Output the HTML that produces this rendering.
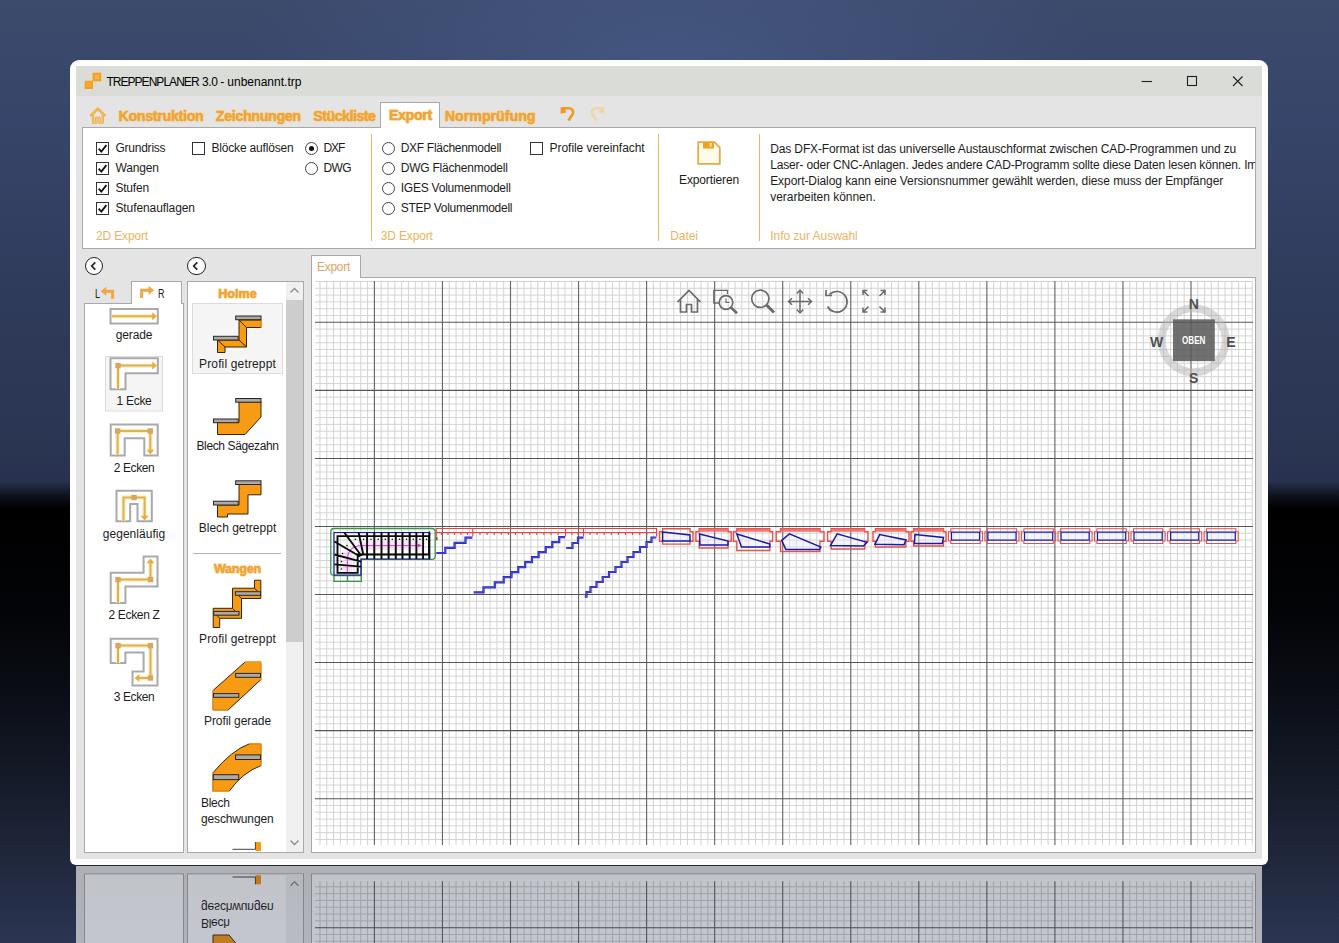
<!DOCTYPE html>
<html lang="de"><head><meta charset="utf-8"><title>TREPPENPLANER 3.0 - unbenannt.trp</title>
<style>
html,body{margin:0;padding:0}
body{width:1339px;height:943px;overflow:hidden;position:relative;font-family:"Liberation Sans",sans-serif;background:#000}
.abs,.t{position:absolute}
.t{white-space:nowrap;display:block}
#bg{left:0;top:0;width:1339px;height:943px;overflow:hidden}
#win{left:70px;top:60px;width:1198px;height:805px;background:#fdfdfd;border-radius:9px 9px 6px 6px}
.cb{position:absolute;width:11px;height:11px;border:1px solid #333;background:#fff;box-sizing:content-box}
.rb{position:absolute;width:11px;height:11px;border:1px solid #444;background:#fff;border-radius:50%;box-sizing:content-box}
.sep{position:absolute;width:1.4px;background:#e3bc5c;top:134px;height:107px}
.glow{text-shadow:0 0 2px #f9d27f,0 0 1px #f3b24e;-webkit-text-stroke:.35px #f0a336}
.circ{position:absolute;width:16.200px;height:16.200px;border:1.300px solid #222;border-radius:50%;background:#fff;box-sizing:content-box}
</style></head><body>
<div id="bg" class="abs">
<div class="abs" style="left:0;top:0;width:1339px;height:510px;background:linear-gradient(#3c4a6c 0px,#37456a 120px,#2f3b5a 300px,#2a3552 450px,#283250 481px,#0d1019 497px,#000 509px)"></div>
<div class="abs" style="left:0;top:0;width:1339px;height:300px;background:radial-gradient(ellipse 430px 260px at 670px 90px,rgba(80,102,152,.5),rgba(72,92,138,.3) 55%,rgba(60,74,108,0) 100%)"></div>
<div class="abs" style="left:0;top:509px;width:1339px;height:434px;background:linear-gradient(#000 0px,#030407 100px,#0a0d15 180px,#141926 260px,#1f2639 340px,#2b3552 434px)"></div>
</div>
<div id="refl" class="abs" style="left:76px;top:866px;width:1186px;height:77px;overflow:hidden;background:#e4e4e4;opacity:.72"><div class="abs" style="left:-76px;top:0;width:1339px;height:858.700px;transform-origin:0 0;transform:translateY(860.300px) scaleY(-1)"><div class="abs" style="left:84px;top:303px;width:100px;height:550px;background:#fff;border:1px solid #a9a9a9;box-sizing:border-box"></div><div class="abs" style="left:187px;top:281px;width:117px;height:572px;background:#fff;border:1px solid #a9a9a9;box-sizing:border-box"></div><div class="abs" style="left:286px;top:642px;width:17px;height:210px;background:#f0f0f0"></div><svg class="abs" style="left:286px;top:834px" width="17" height="17" viewBox="0 0 17 17"><path d="M4.500 6.500l4 4l4 -4" fill="none" stroke="#8a8a8a" stroke-width="1.300"/></svg><svg class="abs" style="left:205px;top:740px" width="70" height="112" viewBox="205 740 70 112"><path d="M213 791.300V772.700Q232 750 249 744H260.900V765.700Q243 772 229.100 791.300z" fill="#f79a14" stroke="#3a2408" stroke-width="1" stroke-linejoin="miter" /><rect x="235.5" y="754.9" width="25.0" height="4.6" fill="#adaaa6" stroke="#262626" stroke-width="1"/><rect x="213.3" y="774.7" width="25.4" height="4.9" fill="#adaaa6" stroke="#262626" stroke-width="1"/><rect x="255.400" y="842" width="5.600" height="9" fill="#f79a14"/><path d="M232.500 849.300H255.400V842" stroke="#444" stroke-width="1" fill="none"/></svg><span class="t " style="left:201.00px;top:794.80px;font-size:12px;line-height:17px;color:#1c1c1c;letter-spacing:-0.303px;">Blech</span><span class="t " style="left:201.00px;top:811.10px;font-size:12px;line-height:17px;color:#1c1c1c;letter-spacing:-0.141px;">geschwungen</span><div class="abs" style="left:311px;top:277px;width:945px;height:576px;background:#fff;border:1px solid #a9a9a9;box-sizing:border-box"></div><svg class="abs" style="left:312px;top:760px" width="943" height="92" viewBox="312 760 943 92"><path d="M319.96 281.0V845.0M326.76 281.0V845.0M333.57 281.0V845.0M340.38 281.0V845.0M347.18 281.0V845.0M353.98 281.0V845.0M360.79 281.0V845.0M367.59 281.0V845.0M381.20 281.0V845.0M388.01 281.0V845.0M394.81 281.0V845.0M401.62 281.0V845.0M408.42 281.0V845.0M415.23 281.0V845.0M422.03 281.0V845.0M428.84 281.0V845.0M435.64 281.0V845.0M449.25 281.0V845.0M456.06 281.0V845.0M462.87 281.0V845.0M469.67 281.0V845.0M476.47 281.0V845.0M483.28 281.0V845.0M490.08 281.0V845.0M496.89 281.0V845.0M503.69 281.0V845.0M517.30 281.0V845.0M524.11 281.0V845.0M530.91 281.0V845.0M537.72 281.0V845.0M544.52 281.0V845.0M551.33 281.0V845.0M558.13 281.0V845.0M564.94 281.0V845.0M571.75 281.0V845.0M585.36 281.0V845.0M592.16 281.0V845.0M598.96 281.0V845.0M605.77 281.0V845.0M612.57 281.0V845.0M619.38 281.0V845.0M626.18 281.0V845.0M632.99 281.0V845.0M639.79 281.0V845.0M653.40 281.0V845.0M660.21 281.0V845.0M667.01 281.0V845.0M673.82 281.0V845.0M680.62 281.0V845.0M687.43 281.0V845.0M694.23 281.0V845.0M701.04 281.0V845.0M707.85 281.0V845.0M721.45 281.0V845.0M728.26 281.0V845.0M735.06 281.0V845.0M741.87 281.0V845.0M748.67 281.0V845.0M755.48 281.0V845.0M762.28 281.0V845.0M769.09 281.0V845.0M775.89 281.0V845.0M789.50 281.0V845.0M796.31 281.0V845.0M803.12 281.0V845.0M809.92 281.0V845.0M816.72 281.0V845.0M823.53 281.0V845.0M830.34 281.0V845.0M837.14 281.0V845.0M843.94 281.0V845.0M857.55 281.0V845.0M864.36 281.0V845.0M871.16 281.0V845.0M877.97 281.0V845.0M884.77 281.0V845.0M891.58 281.0V845.0M898.38 281.0V845.0M905.19 281.0V845.0M912.00 281.0V845.0M925.60 281.0V845.0M932.41 281.0V845.0M939.21 281.0V845.0M946.02 281.0V845.0M952.82 281.0V845.0M959.63 281.0V845.0M966.43 281.0V845.0M973.24 281.0V845.0M980.04 281.0V845.0M993.65 281.0V845.0M1000.46 281.0V845.0M1007.26 281.0V845.0M1014.07 281.0V845.0M1020.88 281.0V845.0M1027.68 281.0V845.0M1034.48 281.0V845.0M1041.29 281.0V845.0M1048.09 281.0V845.0M1061.70 281.0V845.0M1068.51 281.0V845.0M1075.32 281.0V845.0M1082.12 281.0V845.0M1088.92 281.0V845.0M1095.73 281.0V845.0M1102.53 281.0V845.0M1109.34 281.0V845.0M1116.14 281.0V845.0M1129.76 281.0V845.0M1136.56 281.0V845.0M1143.36 281.0V845.0M1150.17 281.0V845.0M1156.97 281.0V845.0M1163.78 281.0V845.0M1170.59 281.0V845.0M1177.39 281.0V845.0M1184.19 281.0V845.0M1197.80 281.0V845.0M1204.61 281.0V845.0M1211.41 281.0V845.0M1218.22 281.0V845.0M1225.03 281.0V845.0M1231.83 281.0V845.0M1238.63 281.0V845.0M1245.44 281.0V845.0M1252.24 281.0V845.0M315.0 281.47H1253.0M315.0 288.28H1253.0M315.0 295.08H1253.0M315.0 301.88H1253.0M315.0 308.69H1253.0M315.0 315.50H1253.0M315.0 329.11H1253.0M315.0 335.91H1253.0M315.0 342.72H1253.0M315.0 349.52H1253.0M315.0 356.32H1253.0M315.0 363.13H1253.0M315.0 369.94H1253.0M315.0 376.74H1253.0M315.0 383.55H1253.0M315.0 397.15H1253.0M315.0 403.96H1253.0M315.0 410.76H1253.0M315.0 417.57H1253.0M315.0 424.38H1253.0M315.0 431.18H1253.0M315.0 437.99H1253.0M315.0 444.79H1253.0M315.0 451.60H1253.0M315.0 465.21H1253.0M315.0 472.01H1253.0M315.0 478.81H1253.0M315.0 485.62H1253.0M315.0 492.43H1253.0M315.0 499.23H1253.0M315.0 506.03H1253.0M315.0 512.84H1253.0M315.0 519.64H1253.0M315.0 533.25H1253.0M315.0 540.06H1253.0M315.0 546.87H1253.0M315.0 553.67H1253.0M315.0 560.48H1253.0M315.0 567.28H1253.0M315.0 574.09H1253.0M315.0 580.89H1253.0M315.0 587.69H1253.0M315.0 601.31H1253.0M315.0 608.11H1253.0M315.0 614.91H1253.0M315.0 621.72H1253.0M315.0 628.52H1253.0M315.0 635.33H1253.0M315.0 642.13H1253.0M315.0 648.94H1253.0M315.0 655.75H1253.0M315.0 669.36H1253.0M315.0 676.16H1253.0M315.0 682.96H1253.0M315.0 689.77H1253.0M315.0 696.58H1253.0M315.0 703.38H1253.0M315.0 710.18H1253.0M315.0 716.99H1253.0M315.0 723.80H1253.0M315.0 737.40H1253.0M315.0 744.21H1253.0M315.0 751.01H1253.0M315.0 757.82H1253.0M315.0 764.62H1253.0M315.0 771.43H1253.0M315.0 778.24H1253.0M315.0 785.04H1253.0M315.0 791.85H1253.0M315.0 805.45H1253.0M315.0 812.26H1253.0M315.0 819.07H1253.0M315.0 825.87H1253.0M315.0 832.67H1253.0M315.0 839.48H1253.0" stroke="#cfcfcf" stroke-width="1" fill="none"/><path d="M374.40 281.0V845.0M442.45 281.0V845.0M510.50 281.0V845.0M578.55 281.0V845.0M646.60 281.0V845.0M714.65 281.0V845.0M782.70 281.0V845.0M850.75 281.0V845.0M918.80 281.0V845.0M986.85 281.0V845.0M1054.90 281.0V845.0M1122.95 281.0V845.0M1191.00 281.0V845.0" stroke="#686868" stroke-width="1.150" fill="none"/><path d="M315.0 322.30H1253.0M315.0 390.35H1253.0M315.0 458.40H1253.0M315.0 526.45H1253.0M315.0 594.50H1253.0M315.0 662.55H1253.0M315.0 730.60H1253.0M315.0 798.65H1253.0" stroke="#555" stroke-width="1.050" fill="none"/></svg></div></div><div id="win" class="abs"></div><div id="page" class="abs" style="left:0;top:0;width:1339px;height:943px"><div class="abs" style="left:76px;top:66px;width:1186px;height:793px;background:#e4e4e4"></div><div class="abs" style="left:76px;top:66px;width:1186px;height:30px;background:#dadcd7"></div><svg class="abs" style="left:84px;top:72px" width="18" height="18" viewBox="0 0 18 18"><rect x="0.700" y="8.700" width="8.300" height="8.300" fill="#f5a11c"/><rect x="8.600" y="0.700" width="8.600" height="8.600" fill="#f5a11c"/><rect x="10.800" y="2.800" width="4.400" height="4.400" fill="#f9b646"/><rect x="2.600" y="10.700" width="4.400" height="4.400" fill="#f7ac30"/></svg><span class="t" style="left:106.400px;top:74.10px;font-size:12px;line-height:17px;color:#000"><span style="letter-spacing:-0.961px">TREPPENPLANER</span> <span style="letter-spacing:-0.402px">3.0 -</span> <span style="letter-spacing:0.003px">unbenannt.trp</span></span><svg class="abs" style="left:1130px;top:66px" width="130" height="30" viewBox="0 0 130 30"><g stroke="#222" stroke-width="1.1" fill="none"><path d="M11.5 15.5h10.5"/><rect x="57.5" y="10.5" width="9" height="9"/><path d="M103 10.5l9.5 9.5M112.5 10.5l-9.5 9.5"/></g></svg><svg class="abs" style="left:89px;top:105.500px" width="18" height="19" viewBox="0 0 18 19"><g fill="none" stroke-linejoin="round" stroke-linecap="round"><path d="M2 9.300L8.900 2.600L15.800 9.300M4 8.600V16.600H7.300V11.800H10.500V16.600H13.800V8.600" stroke="#f0a130" stroke-width="2.300"/><path d="M2 9.300L8.900 2.600L15.800 9.300M4 8.600V16.600H7.300V11.800H10.500V16.600H13.800V8.600" stroke="#fbdc86" stroke-width=".800"/></g></svg><span class="t glow" style="left:118.50px;top:106.00px;font-size:14.2px;line-height:20px;color:#f0a336;font-weight:bold;letter-spacing:-0.279px;">Konstruktion</span><span class="t glow" style="left:215.80px;top:106.00px;font-size:14.2px;line-height:20px;color:#f0a336;font-weight:bold;letter-spacing:-0.305px;">Zeichnungen</span><span class="t glow" style="left:313.30px;top:106.00px;font-size:14.2px;line-height:20px;color:#f0a336;font-weight:bold;letter-spacing:-0.488px;">Stückliste</span><div class="abs" style="left:82px;top:127px;width:1174px;height:122px;background:#fff;border:1px solid #a9a9a9;box-sizing:border-box"></div><div class="abs" style="left:380px;top:102px;width:60px;height:26px;background:#fff;border:1px solid #a9a9a9;border-bottom:none;box-sizing:border-box"></div><span class="t glow" style="left:388.90px;top:105.00px;font-size:14.2px;line-height:20px;color:#f0a336;font-weight:bold;letter-spacing:-0.328px;">Export</span><span class="t glow" style="left:444.80px;top:106.00px;font-size:14.2px;line-height:20px;color:#f0a336;font-weight:bold;letter-spacing:0.009px;">Normprüfung</span><svg class="abs" style="left:559px;top:105px" width="18" height="18" viewBox="0 0 18 18"><path d="M3 3.2h7.2a4 4 0 0 1 3.6 5.6L9.5 15.5" fill="none" stroke="#ee9a28" stroke-width="2.6" stroke-linejoin="miter"/><path d="M1.600 1.800V8.800L7.400 7.600L6 4.400z" fill="#ee9a28"/></svg><svg class="abs" style="left:588px;top:105px" width="18" height="18" viewBox="0 0 18 18"><g transform="translate(18,0) scale(-1,1)"><path d="M3 3.2h7.2a4 4 0 0 1 3.6 5.6L9.5 15.5" fill="none" stroke="#efd6a4" stroke-width="2.600"/><path d="M1.600 1.800V8.800L7.400 7.600L6 4.400z" fill="#efd6a4"/></g></svg><div class="cb" style="left:96.0px;top:142.1px"><svg width="11" height="11" viewBox="0.500 0.500 11 11" style="position:absolute;left:0;top:0"><path d="M2.2 6.2l2.6 2.9L9.9 2.6" fill="none" stroke="#111" stroke-width="1.8"/></svg></div><span class="t " style="left:115.40px;top:140.20px;font-size:12px;line-height:17px;color:#1c1c1c;letter-spacing:-0.224px;">Grundriss</span><div class="cb" style="left:96.0px;top:162.1px"><svg width="11" height="11" viewBox="0.500 0.500 11 11" style="position:absolute;left:0;top:0"><path d="M2.2 6.2l2.6 2.9L9.9 2.6" fill="none" stroke="#111" stroke-width="1.8"/></svg></div><span class="t " style="left:115.40px;top:160.20px;font-size:12px;line-height:17px;color:#1c1c1c;letter-spacing:-0.125px;">Wangen</span><div class="cb" style="left:96.0px;top:182.2px"><svg width="11" height="11" viewBox="0.500 0.500 11 11" style="position:absolute;left:0;top:0"><path d="M2.2 6.2l2.6 2.9L9.9 2.6" fill="none" stroke="#111" stroke-width="1.8"/></svg></div><span class="t " style="left:115.40px;top:180.30px;font-size:12px;line-height:17px;color:#1c1c1c;letter-spacing:-0.199px;">Stufen</span><div class="cb" style="left:96.0px;top:202.3px"><svg width="11" height="11" viewBox="0.500 0.500 11 11" style="position:absolute;left:0;top:0"><path d="M2.2 6.2l2.6 2.9L9.9 2.6" fill="none" stroke="#111" stroke-width="1.8"/></svg></div><span class="t " style="left:115.40px;top:200.40px;font-size:12px;line-height:17px;color:#1c1c1c;letter-spacing:-0.088px;">Stufenauflagen</span><div class="cb" style="left:192.2px;top:142.1px"></div><span class="t " style="left:211.50px;top:140.20px;font-size:12px;line-height:17px;color:#1c1c1c;letter-spacing:-0.181px;">Blöcke auflösen</span><div class="rb" style="left:304.5px;top:141.9px"><div style="position:absolute;left:3px;top:3px;width:5px;height:5px;border-radius:50%;background:#111"></div></div><span class="t " style="left:323.40px;top:140.20px;font-size:12px;line-height:17px;color:#1c1c1c;letter-spacing:-1.000px;">DXF</span><div class="rb" style="left:304.5px;top:161.9px"></div><span class="t " style="left:323.40px;top:160.20px;font-size:12px;line-height:17px;color:#1c1c1c;letter-spacing:-0.609px;">DWG</span><span class="t " style="left:96.00px;top:227.90px;font-size:12px;line-height:17px;color:#e9b45e;letter-spacing:-0.151px;">2D Export</span><div class="sep" style="left:371px"></div><div class="rb" style="left:381.5px;top:141.9px"></div><span class="t " style="left:400.70px;top:140.20px;font-size:12px;line-height:17px;color:#1c1c1c;letter-spacing:-0.287px;">DXF Flächenmodell</span><div class="rb" style="left:381.5px;top:161.9px"></div><span class="t " style="left:400.70px;top:160.20px;font-size:12px;line-height:17px;color:#1c1c1c;letter-spacing:-0.218px;">DWG Flächenmodell</span><div class="rb" style="left:381.5px;top:182.0px"></div><span class="t " style="left:400.70px;top:180.30px;font-size:12px;line-height:17px;color:#1c1c1c;letter-spacing:-0.226px;">IGES Volumenmodell</span><div class="rb" style="left:381.5px;top:202.1px"></div><span class="t " style="left:400.70px;top:200.40px;font-size:12px;line-height:17px;color:#1c1c1c;letter-spacing:-0.278px;">STEP Volumenmodell</span><div class="cb" style="left:530.3px;top:142.1px"></div><span class="t " style="left:549.60px;top:140.20px;font-size:12px;line-height:17px;color:#1c1c1c;letter-spacing:-0.055px;">Profile vereinfacht</span><span class="t " style="left:380.80px;top:227.90px;font-size:12px;line-height:17px;color:#e9b45e;letter-spacing:-0.151px;">3D Export</span><div class="sep" style="left:657.7px"></div><svg class="abs" style="left:696px;top:140px" width="26" height="26" viewBox="0 0 26 26"><path d="M2.2 2.2h16.3l5.3 5.3v16.3H2.200z" fill="#fffbe9" stroke="#e3ab45" stroke-width="1.800" stroke-linejoin="miter"/><rect x="7" y="2.200" width="11" height="6.300" fill="#efa21e"/><rect x="13.600" y="3" width="2.200" height="3.600" fill="#fbe6a8"/></svg><span class="t " style="left:679.00px;top:171.90px;font-size:12px;line-height:17px;color:#1c1c1c;letter-spacing:-0.124px;">Exportieren</span><span class="t " style="left:670.30px;top:227.90px;font-size:12px;line-height:17px;color:#e9b45e;letter-spacing:-0.102px;">Datei</span><div class="sep" style="left:758.8px"></div><div class="abs" style="left:765px;top:134px;width:489.5px;height:80px;overflow:hidden"><span class="t " style="left:5.20px;top:7.30px;font-size:12px;line-height:17px;color:#1c1c1c;letter-spacing:-0.126px;">Das DFX-Format ist das universelle Austauschformat zwischen CAD-Programmen und zu</span><span class="t " style="left:5.20px;top:23.10px;font-size:12px;line-height:17px;color:#1c1c1c;letter-spacing:-0.154px;">Laser- oder CNC-Anlagen. Jedes andere CAD-Programm sollte diese Daten lesen können. Im</span><span class="t " style="left:5.20px;top:38.90px;font-size:12px;line-height:17px;color:#1c1c1c;letter-spacing:-0.075px;">Export-Dialog kann eine Versionsnummer gewählt werden, diese muss der Empfänger</span><span class="t " style="left:5.20px;top:54.70px;font-size:12px;line-height:17px;color:#1c1c1c;letter-spacing:-0.030px;">verarbeiten können.</span></div><span class="t " style="left:770.20px;top:227.90px;font-size:12px;line-height:17px;color:#e9b45e;letter-spacing:-0.034px;">Info zur Auswahl</span><div class="circ" style="left:84.6px;top:257.3px"><svg width="16" height="16" viewBox="0.500 0.500 16 16" style="position:absolute;left:0;top:0"><path d="M9.800 4.800L6.200 8.500l3.600 3.700" fill="none" stroke="#222" stroke-width="1.7"/></svg></div><div class="circ" style="left:187.4px;top:257.3px"><svg width="16" height="16" viewBox="0.500 0.500 16 16" style="position:absolute;left:0;top:0"><path d="M9.800 4.800L6.200 8.500l3.600 3.700" fill="none" stroke="#222" stroke-width="1.7"/></svg></div><div class="abs" style="left:84px;top:303px;width:100px;height:550px;background:#fff;border:1px solid #a9a9a9;box-sizing:border-box"></div><div class="abs" style="left:131px;top:281px;width:51px;height:23px;background:#fff;border:1px solid #a9a9a9;border-bottom:none;box-sizing:border-box"></div><span class="t " style="left:94.80px;top:285.70px;font-size:12px;line-height:17px;color:#222;transform-origin:0 50%;transform:scaleX(0.7492);">L</span><span class="t " style="left:158.00px;top:285.50px;font-size:12px;line-height:17px;color:#222;transform-origin:0 50%;transform:scaleX(0.7501);">R</span><svg class="abs" style="left:100.300px;top:285.800px" width="16" height="15" viewBox="0 0 16 15"><path d="M12.600 12.800V5.200H5.500" fill="none" stroke="#f1a745" stroke-width="3"/><path d="M0.500 5.200L6.300 0.700v9z" fill="#f1a745"/></svg><svg class="abs" style="left:139px;top:285px" width="16" height="15" viewBox="0 0 16 15"><path d="M2.600 12.900V5.200h7.900" fill="none" stroke="#f1a745" stroke-width="3"/><path d="M15.200 5.200L9.500 0.700v9z" fill="#f1a745"/></svg><svg class="abs" style="left:84px;top:300px" width="100" height="400" viewBox="84 300 100 400"><rect x="105.500" y="356.500" width="57" height="54.500" fill="#f5f5f5" stroke="#dcdcdc" stroke-width="1"/><g fill="#fff" stroke="#a9a9a9" stroke-width="2" stroke-linejoin="miter"><rect x="110.500" y="309" width="47.300" height="14.500"/><path d="M110.500 358.300H157.800V373.200H125.500V389.200H110.500z" fill="#fff"/><path d="M110.700 424.500H157.700V455.500H144.300V438.200H124.700V455.500H110.700z"/><path d="M116.500 490.700H151.800V521.300H137.500V504H130.200V521.300H116.500z"/><path d="M110.700 603V572.700H143.600V556.500H157.500V586.400H125.400V603z"/><path d="M110.700 638.700H157.500V685.400H132.500V671.500H143.600V652.500H125.400V663H110.700z"/></g><g fill="none" stroke="#fdf0c0" stroke-width="4.400"><path d="M112 316.200H153"/><path d="M118 389V365.600H153"/><path d="M117.600 455V431H150.300V450"/><path d="M123.500 521V497.500H144.600V516"/><path d="M118 603V579.600H150.500V563"/><path d="M118 663V645.600H150.500V678H139"/></g><g fill="none" stroke="#ddb052" stroke-width="2"><path d="M112 316.200H153"/><path d="M118 389V365.600H153"/><path d="M117.600 455V431H150.300V450"/><path d="M123.500 521V497.500H144.600V516"/><path d="M118 603V579.600H150.500V563"/><path d="M118 663V645.600H150.500V678H139"/></g><path d="M157.0 316.2l-4.800 -4v8z" fill="#efab3a"/><path d="M157.0 365.6l-4.800 -4v8z" fill="#efab3a"/><path d="M150.3 454.5l-4 -4.800h8z" fill="#efab3a"/><path d="M144.6 520.5l-4 -4.800h8z" fill="#efab3a"/><path d="M150.5 558.5l-4 4.800h8z" fill="#efab3a"/><path d="M134.5 678.0l4.800 -4v8z" fill="#efab3a"/><rect x="115.3" y="362.9" width="5.400" height="5.400" fill="#d8a661"/><rect x="114.9" y="428.3" width="5.400" height="5.400" fill="#d8a661"/><rect x="147.6" y="428.3" width="5.400" height="5.400" fill="#d8a661"/><rect x="131.3" y="494.8" width="5.400" height="5.400" fill="#d8a661"/><rect x="115.3" y="576.9" width="5.400" height="5.400" fill="#d8a661"/><rect x="147.8" y="576.9" width="5.400" height="5.400" fill="#d8a661"/><rect x="115.3" y="642.9" width="5.400" height="5.400" fill="#d8a661"/><rect x="147.8" y="642.9" width="5.400" height="5.400" fill="#d8a661"/><rect x="147.8" y="675.3" width="5.400" height="5.400" fill="#d8a661"/></svg><span class="t " style="left:115.75px;top:327.30px;font-size:12px;line-height:17px;color:#1c1c1c;letter-spacing:-0.144px;">gerade</span><span class="t " style="left:116.50px;top:393.10px;font-size:12px;line-height:17px;color:#1c1c1c;letter-spacing:-0.281px;">1 Ecke</span><span class="t " style="left:113.75px;top:459.50px;font-size:12px;line-height:17px;color:#1c1c1c;letter-spacing:-0.408px;">2 Ecken</span><span class="t " style="left:102.75px;top:525.70px;font-size:12px;line-height:17px;color:#1c1c1c;letter-spacing:0.041px;">gegenläufig</span><span class="t " style="left:108.50px;top:607.10px;font-size:12px;line-height:17px;color:#1c1c1c;letter-spacing:-0.336px;">2 Ecken Z</span><span class="t " style="left:113.75px;top:689.10px;font-size:12px;line-height:17px;color:#1c1c1c;letter-spacing:-0.408px;">3 Ecken</span><div class="abs" style="left:187px;top:281px;width:117px;height:572px;background:#fff;border:1px solid #a9a9a9;box-sizing:border-box;overflow:hidden"></div><div class="abs" style="left:286px;top:282px;width:17px;height:570px;background:#f0f0f0"></div><div class="abs" style="left:286px;top:300px;width:17px;height:342px;background:#cdcdcd"></div><svg class="abs" style="left:286px;top:282px" width="17" height="17" viewBox="0 0 17 17"><path d="M4.500 10.500l4 -4l4 4" fill="none" stroke="#8a8a8a" stroke-width="1.300"/></svg><svg class="abs" style="left:286px;top:834px" width="17" height="17" viewBox="0 0 17 17"><path d="M4.500 6.500l4 4l4 -4" fill="none" stroke="#8a8a8a" stroke-width="1.300"/></svg><div class="abs" style="left:192px;top:303px;width:91px;height:71px;background:#f5f5f5;border:1px solid #dcdcdc;box-sizing:border-box"></div><span class="t glow" style="left:218.15px;top:284.70px;font-size:12.5px;line-height:18px;color:#f0a336;font-weight:bold;letter-spacing:0.060px;">Holme</span><div class="abs" style="left:193px;top:553px;width:88px;height:1px;background:#b4b4b4"></div><span class="t glow" style="left:213.90px;top:560.30px;font-size:12.5px;line-height:18px;color:#f0a336;font-weight:bold;letter-spacing:-0.191px;">Wangen</span><svg class="abs" style="left:205px;top:305px" width="70" height="547" viewBox="205 305 70 547"><path d="M261 320V327.500H246.500V347H225V352.500H217.500V340H239V320z" fill="#f79a14" stroke="#3a2408" stroke-width="1" stroke-linejoin="miter" /><path d="M239 320l7.500 7.500M239 340l7.500 7M217.500 340l7.500 7" stroke="#3a2408" stroke-width="1" fill="none"/><path d="M261 320.500v7" stroke="#f79a14" stroke-width="1.500"/><rect x="235.7" y="316.0" width="25.3" height="3.7" fill="#adaaa6" stroke="#262626" stroke-width="1"/><rect x="213.5" y="336.3" width="24.7" height="3.7" fill="#adaaa6" stroke="#262626" stroke-width="1"/><path d="M239 402H261V417L245 434.500H217.500V422.500H239z" fill="#f79a14" stroke="#3a2408" stroke-width="1" stroke-linejoin="miter" /><rect x="235.7" y="398.5" width="25.3" height="3.7" fill="#adaaa6" stroke="#262626" stroke-width="1"/><rect x="213.5" y="419.0" width="24.7" height="3.7" fill="#adaaa6" stroke="#262626" stroke-width="1"/><path d="M239 484.500H261V494.800H248V514H227.500V517H217.500V505H239z" fill="#f79a14" stroke="#3a2408" stroke-width="1" stroke-linejoin="miter" /><rect x="235.7" y="480.8" width="25.3" height="3.7" fill="#adaaa6" stroke="#262626" stroke-width="1"/><rect x="213.5" y="501.2" width="24.7" height="3.8" fill="#adaaa6" stroke="#262626" stroke-width="1"/><path d="M254.500 580.200H260.800V598.500H241.500V618.300H219.700V627.500H213.200V608.300H232.500V588.200H254.500z" fill="#f79a14" stroke="#3a2408" stroke-width="1" stroke-linejoin="miter" /><path d="M254.500 588.200l3 3M232.500 608.300l3 3.100M241.500 598.500l-3 -3.200M219.700 618.300l-3 -3.100" stroke="#3a2408" stroke-width="1" fill="none"/><rect x="235.4" y="591.7" width="25.1" height="3.6" fill="#adaaa6" stroke="#262626" stroke-width="1"/><rect x="213.7" y="611.4" width="25.3" height="3.8" fill="#adaaa6" stroke="#262626" stroke-width="1"/><path d="M213.100 709.900V690.400L244.900 662.200H260.800V679.700L228.200 709.900z" fill="#f79a14" stroke="#3a2408" stroke-width="1" stroke-linejoin="miter" /><path d="M213.100 690.400v19.500h15.100M244.900 662.200h15.900v17.500" stroke="#f79a14" stroke-width="1.400" fill="none"/><rect x="235.6" y="673.4" width="24.9" height="3.9" fill="#adaaa6" stroke="#262626" stroke-width="1"/><rect x="213.5" y="693.6" width="25.3" height="3.7" fill="#adaaa6" stroke="#262626" stroke-width="1"/><path d="M213 791.300V772.700Q232 750 249 744H260.900V765.700Q243 772 229.100 791.300z" fill="#f79a14" stroke="#3a2408" stroke-width="1" stroke-linejoin="miter" /><path d="M213 772.700v18.600h16.100M249 744h11.900v21.700" stroke="#f79a14" stroke-width="1.400" fill="none"/><rect x="235.5" y="754.9" width="25.0" height="4.6" fill="#adaaa6" stroke="#262626" stroke-width="1"/><rect x="213.3" y="774.7" width="25.4" height="4.9" fill="#adaaa6" stroke="#262626" stroke-width="1"/><rect x="255.400" y="842" width="5.600" height="9" fill="#f79a14"/><path d="M232.500 849.300H255.400V842" stroke="#444" stroke-width="1" fill="none"/></svg><span class="t " style="left:199.00px;top:356.10px;font-size:12px;line-height:17px;color:#1c1c1c;letter-spacing:0.153px;">Profil getreppt</span><span class="t " style="left:196.50px;top:438.10px;font-size:12px;line-height:17px;color:#1c1c1c;letter-spacing:-0.385px;">Blech Sägezahn</span><span class="t " style="left:198.75px;top:520.10px;font-size:12px;line-height:17px;color:#1c1c1c;letter-spacing:0.008px;">Blech getreppt</span><span class="t " style="left:199.00px;top:631.10px;font-size:12px;line-height:17px;color:#1c1c1c;letter-spacing:0.153px;">Profil getreppt</span><span class="t " style="left:204.00px;top:713.10px;font-size:12px;line-height:17px;color:#1c1c1c;letter-spacing:-0.080px;">Profil gerade</span><span class="t " style="left:201.00px;top:794.80px;font-size:12px;line-height:17px;color:#1c1c1c;letter-spacing:-0.303px;">Blech</span><span class="t " style="left:201.00px;top:811.10px;font-size:12px;line-height:17px;color:#1c1c1c;letter-spacing:-0.141px;">geschwungen</span><div class="abs" style="left:311px;top:277px;width:945px;height:576px;background:#fff;border:1px solid #a9a9a9;box-sizing:border-box"></div><div class="abs" style="left:311px;top:255px;width:50px;height:23px;background:#fff;border:1px solid #a9a9a9;border-bottom:none;box-sizing:border-box"></div><span class="t " style="left:316.90px;top:259.40px;font-size:12px;line-height:17px;color:#dba463;letter-spacing:-0.247px;">Export</span><svg class="abs" style="left:312px;top:278px" width="943" height="574" viewBox="312 278 943 574"><path d="M319.96 281.0V845.0M326.76 281.0V845.0M333.57 281.0V845.0M340.38 281.0V845.0M347.18 281.0V845.0M353.98 281.0V845.0M360.79 281.0V845.0M367.59 281.0V845.0M381.20 281.0V845.0M388.01 281.0V845.0M394.81 281.0V845.0M401.62 281.0V845.0M408.42 281.0V845.0M415.23 281.0V845.0M422.03 281.0V845.0M428.84 281.0V845.0M435.64 281.0V845.0M449.25 281.0V845.0M456.06 281.0V845.0M462.87 281.0V845.0M469.67 281.0V845.0M476.47 281.0V845.0M483.28 281.0V845.0M490.08 281.0V845.0M496.89 281.0V845.0M503.69 281.0V845.0M517.30 281.0V845.0M524.11 281.0V845.0M530.91 281.0V845.0M537.72 281.0V845.0M544.52 281.0V845.0M551.33 281.0V845.0M558.13 281.0V845.0M564.94 281.0V845.0M571.75 281.0V845.0M585.36 281.0V845.0M592.16 281.0V845.0M598.96 281.0V845.0M605.77 281.0V845.0M612.57 281.0V845.0M619.38 281.0V845.0M626.18 281.0V845.0M632.99 281.0V845.0M639.79 281.0V845.0M653.40 281.0V845.0M660.21 281.0V845.0M667.01 281.0V845.0M673.82 281.0V845.0M680.62 281.0V845.0M687.43 281.0V845.0M694.23 281.0V845.0M701.04 281.0V845.0M707.85 281.0V845.0M721.45 281.0V845.0M728.26 281.0V845.0M735.06 281.0V845.0M741.87 281.0V845.0M748.67 281.0V845.0M755.48 281.0V845.0M762.28 281.0V845.0M769.09 281.0V845.0M775.89 281.0V845.0M789.50 281.0V845.0M796.31 281.0V845.0M803.12 281.0V845.0M809.92 281.0V845.0M816.72 281.0V845.0M823.53 281.0V845.0M830.34 281.0V845.0M837.14 281.0V845.0M843.94 281.0V845.0M857.55 281.0V845.0M864.36 281.0V845.0M871.16 281.0V845.0M877.97 281.0V845.0M884.77 281.0V845.0M891.58 281.0V845.0M898.38 281.0V845.0M905.19 281.0V845.0M912.00 281.0V845.0M925.60 281.0V845.0M932.41 281.0V845.0M939.21 281.0V845.0M946.02 281.0V845.0M952.82 281.0V845.0M959.63 281.0V845.0M966.43 281.0V845.0M973.24 281.0V845.0M980.04 281.0V845.0M993.65 281.0V845.0M1000.46 281.0V845.0M1007.26 281.0V845.0M1014.07 281.0V845.0M1020.88 281.0V845.0M1027.68 281.0V845.0M1034.48 281.0V845.0M1041.29 281.0V845.0M1048.09 281.0V845.0M1061.70 281.0V845.0M1068.51 281.0V845.0M1075.32 281.0V845.0M1082.12 281.0V845.0M1088.92 281.0V845.0M1095.73 281.0V845.0M1102.53 281.0V845.0M1109.34 281.0V845.0M1116.14 281.0V845.0M1129.76 281.0V845.0M1136.56 281.0V845.0M1143.36 281.0V845.0M1150.17 281.0V845.0M1156.97 281.0V845.0M1163.78 281.0V845.0M1170.59 281.0V845.0M1177.39 281.0V845.0M1184.19 281.0V845.0M1197.80 281.0V845.0M1204.61 281.0V845.0M1211.41 281.0V845.0M1218.22 281.0V845.0M1225.03 281.0V845.0M1231.83 281.0V845.0M1238.63 281.0V845.0M1245.44 281.0V845.0M1252.24 281.0V845.0M315.0 281.47H1253.0M315.0 288.28H1253.0M315.0 295.08H1253.0M315.0 301.88H1253.0M315.0 308.69H1253.0M315.0 315.50H1253.0M315.0 329.11H1253.0M315.0 335.91H1253.0M315.0 342.72H1253.0M315.0 349.52H1253.0M315.0 356.32H1253.0M315.0 363.13H1253.0M315.0 369.94H1253.0M315.0 376.74H1253.0M315.0 383.55H1253.0M315.0 397.15H1253.0M315.0 403.96H1253.0M315.0 410.76H1253.0M315.0 417.57H1253.0M315.0 424.38H1253.0M315.0 431.18H1253.0M315.0 437.99H1253.0M315.0 444.79H1253.0M315.0 451.60H1253.0M315.0 465.21H1253.0M315.0 472.01H1253.0M315.0 478.81H1253.0M315.0 485.62H1253.0M315.0 492.43H1253.0M315.0 499.23H1253.0M315.0 506.03H1253.0M315.0 512.84H1253.0M315.0 519.64H1253.0M315.0 533.25H1253.0M315.0 540.06H1253.0M315.0 546.87H1253.0M315.0 553.67H1253.0M315.0 560.48H1253.0M315.0 567.28H1253.0M315.0 574.09H1253.0M315.0 580.89H1253.0M315.0 587.69H1253.0M315.0 601.31H1253.0M315.0 608.11H1253.0M315.0 614.91H1253.0M315.0 621.72H1253.0M315.0 628.52H1253.0M315.0 635.33H1253.0M315.0 642.13H1253.0M315.0 648.94H1253.0M315.0 655.75H1253.0M315.0 669.36H1253.0M315.0 676.16H1253.0M315.0 682.96H1253.0M315.0 689.77H1253.0M315.0 696.58H1253.0M315.0 703.38H1253.0M315.0 710.18H1253.0M315.0 716.99H1253.0M315.0 723.80H1253.0M315.0 737.40H1253.0M315.0 744.21H1253.0M315.0 751.01H1253.0M315.0 757.82H1253.0M315.0 764.62H1253.0M315.0 771.43H1253.0M315.0 778.24H1253.0M315.0 785.04H1253.0M315.0 791.85H1253.0M315.0 805.45H1253.0M315.0 812.26H1253.0M315.0 819.07H1253.0M315.0 825.87H1253.0M315.0 832.67H1253.0M315.0 839.48H1253.0" stroke="#d3d3d3" stroke-width="1" fill="none"/><path d="M374.40 281.0V845.0M442.45 281.0V845.0M510.50 281.0V845.0M578.55 281.0V845.0M646.60 281.0V845.0M714.65 281.0V845.0M782.70 281.0V845.0M850.75 281.0V845.0M918.80 281.0V845.0M986.85 281.0V845.0M1054.90 281.0V845.0M1122.95 281.0V845.0M1191.00 281.0V845.0" stroke="#686868" stroke-width="1.150" fill="none"/><path d="M315.0 322.30H1253.0M315.0 390.35H1253.0M315.0 458.40H1253.0M315.0 526.45H1253.0M315.0 594.50H1253.0M315.0 662.55H1253.0M315.0 730.60H1253.0M315.0 798.65H1253.0" stroke="#555" stroke-width="1.050" fill="none"/><circle cx="1193.700" cy="340.300" r="32" fill="none" stroke="#b4b4b4" stroke-opacity=".5" stroke-width="8"/><rect x="1173" y="319.300" width="41.800" height="41.800" fill="#585858" fill-opacity=".86"/></svg><span class="t " style="left:1182.20px;top:333.40px;font-size:10.8px;line-height:15px;color:#fff;font-weight:bold;transform-origin:0 50%;transform:scaleX(0.7499);">OBEN</span><span class="t " style="left:1188.64px;top:293.70px;font-size:14px;line-height:20px;color:#4f4f4f;font-weight:bold;">N</span><span class="t " style="left:1189.03px;top:367.80px;font-size:14px;line-height:20px;color:#4f4f4f;font-weight:bold;">S</span><span class="t " style="left:1149.89px;top:331.60px;font-size:14px;line-height:20px;color:#4f4f4f;font-weight:bold;">W</span><span class="t " style="left:1226.33px;top:331.60px;font-size:14px;line-height:20px;color:#4f4f4f;font-weight:bold;">E</span><svg class="abs" style="left:312px;top:278px" width="943" height="574" viewBox="312 278 943 574"><g fill="none" stroke="#6a6a6a" stroke-width="1.700" stroke-linejoin="miter"><path d="M677.500 302L689 290.500L700.500 302M680.500 299.500V312H686.500V304.500H691.500V312H697.500V299.500"/><path d="M719 303H713.800V290.300H727.500V294" stroke-width="1.300"/><circle cx="726" cy="302.500" r="6.800"/><path d="M726 298.500V302.500H729.500" stroke-width="1.200"/><path d="M731 307.500L737 313.300" stroke-width="2.600"/><circle cx="760.300" cy="298.800" r="8.600"/><path d="M766.500 305L774 312.500" stroke-width="3"/><path d="M788.500 301.500H811.500M800 290V313" stroke-width="1.500"/><path d="M796.800 293.500L800 290L803.200 293.500M796.800 309.500L800 313L803.200 309.500M792 298.300L788.500 301.500L792 304.700M808 298.300L811.500 301.500L808 304.700" stroke-width="1.500"/><path d="M829.500 294.500A10.300 10.300 0 1 1 827.600 306.500"/><path d="M826 290V295.500H832" /><path d="M863 290.500L868.500 296M863 295V290.500H867.500M885 290.500L879.500 296M880.500 290.500H885V295M863 312L868.500 306.500M863 307.500V312H867.500M885 312L879.500 306.500M885 307.500V312H880.500" stroke-width="1.500"/></g><g fill="none" stroke="#3a9446" stroke-width="1.300"><path d="M334 528.500H432A3.200 3.200 0 0 1 435.200 531.700V556.400A3 3 0 0 1 432.200 559.400H361.300V575.600H334A3.200 3.200 0 0 1 330.800 572.400V531.700A3.200 3.200 0 0 1 334 528.500z"/><path d="M334 575.600V581.400H361.300V575.600M347.500 575.600V581.400M429.500 531V536M429.500 554V559"/></g><path d="M358 541H421V550H358z" fill="#f3c6f0" fill-opacity=".45"/><path d="M343 552H352V573H343z" fill="#f3c6f0" fill-opacity=".45"/><path d="M334 532.500H429.400V559H361V575H334z" fill="none" stroke="#1a1aa8" stroke-width="1.200"/><path d="M421 545.500H362Q347.400 546 347.400 560V573" fill="none" stroke="#cc3ccc" stroke-width="1.100" stroke-opacity=".85"/><path d="M422 545.500l-4 -1.800v3.600z" fill="#cc3ccc"/><path d="M337.500 536.100H429V554.500H357.700V572.900H337.500zM367.1 532.500V559M374.3 532.500V559M381.5 532.500V559M388.6 532.500V559M395.8 532.500V559M402.5 532.500V559M409.7 532.500V559M416.4 532.500V559M423.1 532.500V559M429.4 532.500V559M363.500 555.500L358.600 532.500M361.500 556L344.300 532.500M360 556.500L334.400 541.500M361 561.700L334.400 554.500M361 566.600L334.400 564.400" fill="none" stroke="#0a0a0a" stroke-width="1.900"/><g fill="#111"><circle cx="355.5" cy="539.300" r=".800"/><circle cx="363.5" cy="539.300" r=".800"/><circle cx="371.0" cy="539.300" r=".800"/><circle cx="378.2" cy="539.300" r=".800"/><circle cx="385.3" cy="539.300" r=".800"/><circle cx="392.3" cy="539.300" r=".800"/><circle cx="399.5" cy="539.300" r=".800"/><circle cx="406.5" cy="539.300" r=".800"/><circle cx="413.3" cy="539.300" r=".800"/><circle cx="420.0" cy="539.300" r=".800"/><circle cx="426.5" cy="539.300" r=".800"/><circle cx="347.0" cy="545.5" r=".800"/><circle cx="342.5" cy="553.5" r=".800"/><circle cx="341.5" cy="561.5" r=".800"/><circle cx="341.5" cy="569.0" r=".800"/></g><path d="M436.200 528.500H656.600V532.500H436.200zM436.2 528.500V536.500M472.8 528.500V536.500M565.6 528.500V536.500M583.5 528.500V536.500M656.6 528.500V536.500M441.5 532.500V535M448.0 532.500V535M454.5 532.500V535M461.0 532.500V535M467.5 532.500V535M480.0 532.500V535M487.1 532.500V535M494.2 532.500V535M501.3 532.500V535M508.4 532.500V535M515.5 532.500V535M522.6 532.500V535M529.7 532.500V535M536.8 532.500V535M543.9 532.500V535M551.0 532.500V535M558.1 532.500V535M572.0 532.500V535M578.0 532.500V535M590.0 532.500V535M597.1 532.500V535M604.2 532.500V535M611.3 532.500V535M618.4 532.500V535M625.5 532.500V535M632.6 532.500V535M639.7 532.500V535M646.8 532.500V535" fill="none" stroke="#ee4040" stroke-width="1.150"/><rect x="436" y="536.800" width="1.600" height="3.400" fill="#d03030"/><path d="M436.3 553.0H445.3V547.9H454.6V542.8H465.5V537.7H472.4V537.7H472.400M473.6 592.3H483.5V587.3H494.8V582.3H503.7V577.2H511.5V572.2H518.3V567.2H525.2V562.2H532.0V557.2H538.6V552.1H545.7V547.1H552.3V542.1H559.2V537.1H565M566.2 548.0H572.5V543.0H578.0V537.7H583.500M584.8 596.6H586.5V592.0H590.5V587.0H596.5V582.0H602.7V577.0H609.0V572.0H615.5V567.0H621.5V562.0H627.5V557.0H633.5V552.0H640.0V547.0H646.5V542.0H651.5V537.5H656.300" fill="none" stroke="#2626c4" stroke-width="2.200" stroke-linejoin="miter"/><path d="M436.3 553.0H445.3V547.9H454.6V542.8H465.5V537.7H472.4V537.7H472.400M473.6 592.3H483.5V587.3H494.8V582.3H503.7V577.2H511.5V572.2H518.3V567.2H525.2V562.2H532.0V557.2H538.6V552.1H545.7V547.1H552.3V542.1H559.2V537.1H565M566.2 548.0H572.5V543.0H578.0V537.7H583.500M584.8 596.6H586.5V592.0H590.5V587.0H596.5V582.0H602.7V577.0H609.0V572.0H615.5V567.0H621.5V562.0H627.5V557.0H633.5V552.0H640.0V547.0H646.5V542.0H651.5V537.5H656.300" fill="none" stroke="#9aa0ee" stroke-width=".500" stroke-linejoin="miter" stroke-opacity=".6"/><path d="M662.6 528.7H690.0V531.8H693.0V541.3H690.0V544.1H662.6V541.3H659.5V531.8H662.6z" fill="none" stroke="#e4524c" stroke-width="1.40"/><path d="M662.6 532.0L690.0 535.0L690.0 541.0L662.6 541.0z" fill="#e4e6fb" fill-opacity=".4" stroke="#1a1aa8" stroke-width="1.50" stroke-linejoin="miter"/><path d="M699.2 528.7H728.0V531.8H731.2V541.3H728.0V548.0H699.2V541.3H695.9V531.8H699.2z" fill="none" stroke="#e4524c" stroke-width="1.40"/><rect x="699.2" y="528.7" width="28.8" height="3.100" fill="#ee6c68" fill-opacity=".9"/><path d="M699.5 534.0L728.0 541.0L728.0 545.0L700.0 545.0z" fill="#e4e6fb" fill-opacity=".4" stroke="#1a1aa8" stroke-width="1.50" stroke-linejoin="miter"/><path d="M736.8 528.7H769.8V531.8H772.6V541.3H769.8V550.5H736.8V541.3H733.4V531.8H736.8z" fill="none" stroke="#e4524c" stroke-width="1.40"/><rect x="736.8" y="528.7" width="33.0" height="3.100" fill="#ee6c68" fill-opacity=".9"/><path d="M736.8 534.0L769.8 544.0L769.8 547.0L741.5 547.0z" fill="#e4e6fb" fill-opacity=".4" stroke="#1a1aa8" stroke-width="1.50" stroke-linejoin="miter"/><path d="M780.5 528.7H820.0V531.8H824.0V541.3H820.0V551.5H780.5V541.3H776.2V531.8H780.5z" fill="none" stroke="#e4524c" stroke-width="1.40"/><rect x="780.5" y="528.7" width="39.5" height="3.100" fill="#ee6c68" fill-opacity=".9"/><path d="M781.7 540.4L789.4 533.9L820.9 547.0L819.3 549.4L785.8 549.4z" fill="#e4e6fb" fill-opacity=".4" stroke="#1a1aa8" stroke-width="1.50" stroke-linejoin="miter"/><path d="M831.2 528.7H864.7V531.8H868.0V541.3H864.7V549.0H831.2V541.3H827.6V531.8H831.2z" fill="none" stroke="#e4524c" stroke-width="1.40"/><rect x="831.2" y="528.7" width="33.5" height="3.100" fill="#ee6c68" fill-opacity=".9"/><path d="M830.5 545.4L837.2 533.9L867.0 542.3L863.5 545.9z" fill="#e4e6fb" fill-opacity=".4" stroke="#1a1aa8" stroke-width="1.50" stroke-linejoin="miter"/><path d="M875.4 528.7H905.8V531.8H909.0V541.3H905.8V547.0H875.4V541.3H873.0V531.8H875.4z" fill="none" stroke="#e4524c" stroke-width="1.40"/><rect x="875.4" y="528.7" width="30.4" height="3.100" fill="#ee6c68" fill-opacity=".9"/><path d="M875.0 544.2L879.7 534.6L906.0 539.9L904.0 544.7z" fill="#e4e6fb" fill-opacity=".4" stroke="#1a1aa8" stroke-width="1.50" stroke-linejoin="miter"/><path d="M913.7 528.7H943.5V531.8H946.0V541.3H943.5V546.0H913.7V541.3H911.0V531.8H913.7z" fill="none" stroke="#e4524c" stroke-width="1.40"/><rect x="913.7" y="528.7" width="29.8" height="3.100" fill="#ee6c68" fill-opacity=".9"/><path d="M914.9 534.6L943.5 537.5L942.3 543.5L914.4 543.5z" fill="#e4e6fb" fill-opacity=".4" stroke="#1a1aa8" stroke-width="1.50" stroke-linejoin="miter"/><path d="M950.8 528.7H980.2V531.8H982.5V541.0H980.2V543.5H950.8V541.0H948.4V531.8H950.8z" fill="none" stroke="#e4524c" stroke-width="1.10"/><path d="M951.4 532.2L979.6 532.2L979.6 540.0L951.4 540.0z" fill="#e4e6fb" fill-opacity=".4" stroke="#1a1aa8" stroke-width="1.25" stroke-linejoin="miter"/><path d="M987.3 528.7H1016.7V531.8H1019.0V541.0H1016.7V543.5H987.3V541.0H984.9V531.8H987.3z" fill="none" stroke="#e4524c" stroke-width="1.10"/><path d="M987.9 532.2L1016.1 532.2L1016.1 540.0L987.9 540.0z" fill="#e4e6fb" fill-opacity=".4" stroke="#1a1aa8" stroke-width="1.25" stroke-linejoin="miter"/><path d="M1023.9 528.7H1053.3V531.8H1055.6V541.0H1053.3V543.5H1023.9V541.0H1021.5V531.8H1023.9z" fill="none" stroke="#e4524c" stroke-width="1.10"/><path d="M1024.5 532.2L1052.7 532.2L1052.7 540.0L1024.5 540.0z" fill="#e4e6fb" fill-opacity=".4" stroke="#1a1aa8" stroke-width="1.25" stroke-linejoin="miter"/><path d="M1060.4 528.7H1089.8V531.8H1092.1V541.0H1089.8V543.5H1060.4V541.0H1058.0V531.8H1060.4z" fill="none" stroke="#e4524c" stroke-width="1.10"/><path d="M1061.0 532.2L1089.2 532.2L1089.2 540.0L1061.0 540.0z" fill="#e4e6fb" fill-opacity=".4" stroke="#1a1aa8" stroke-width="1.25" stroke-linejoin="miter"/><path d="M1096.9 528.7H1126.3V531.8H1128.6V541.0H1126.3V543.5H1096.9V541.0H1094.5V531.8H1096.9z" fill="none" stroke="#e4524c" stroke-width="1.10"/><path d="M1097.5 532.2L1125.7 532.2L1125.7 540.0L1097.5 540.0z" fill="#e4e6fb" fill-opacity=".4" stroke="#1a1aa8" stroke-width="1.25" stroke-linejoin="miter"/><path d="M1133.5 528.7H1162.8V531.8H1165.1V541.0H1162.8V543.5H1133.5V541.0H1131.0V531.8H1133.5z" fill="none" stroke="#e4524c" stroke-width="1.10"/><path d="M1134.0 532.2L1162.2 532.2L1162.2 540.0L1134.0 540.0z" fill="#e4e6fb" fill-opacity=".4" stroke="#1a1aa8" stroke-width="1.25" stroke-linejoin="miter"/><path d="M1170.0 528.7H1199.4V531.8H1201.7V541.0H1199.4V543.5H1170.0V541.0H1167.6V531.8H1170.0z" fill="none" stroke="#e4524c" stroke-width="1.10"/><path d="M1170.6 532.2L1198.8 532.2L1198.8 540.0L1170.6 540.0z" fill="#e4e6fb" fill-opacity=".4" stroke="#1a1aa8" stroke-width="1.25" stroke-linejoin="miter"/><path d="M1206.5 528.7H1235.9V531.8H1238.2V541.0H1235.9V543.5H1206.5V541.0H1204.1V531.8H1206.5z" fill="none" stroke="#e4524c" stroke-width="1.10"/><path d="M1207.1 532.2L1235.3 532.2L1235.3 540.0L1207.1 540.0z" fill="#e4e6fb" fill-opacity=".4" stroke="#1a1aa8" stroke-width="1.25" stroke-linejoin="miter"/></svg></div></body></html>
